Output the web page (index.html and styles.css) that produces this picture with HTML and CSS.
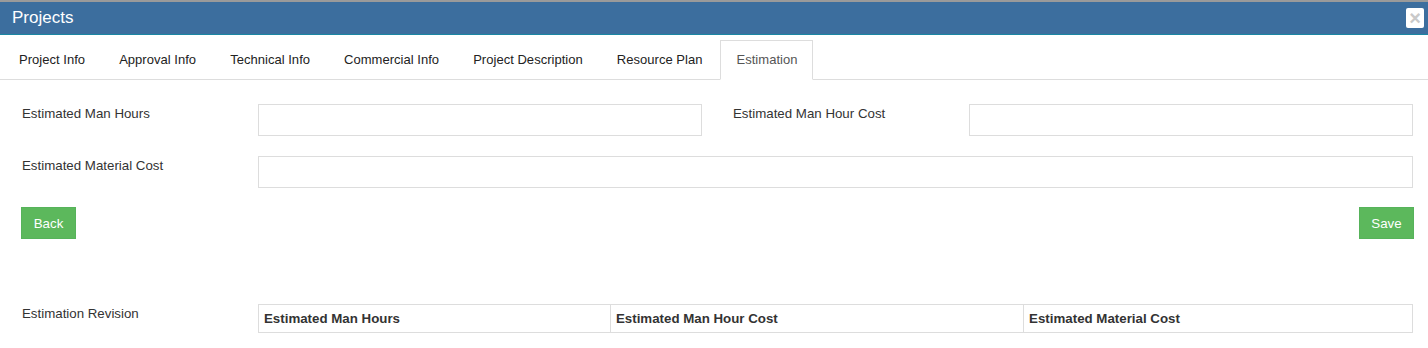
FILE: index.html
```html
<!DOCTYPE html>
<html lang="en">
<head>
    <meta charset="UTF-8">
    <title>Projects</title>
    <link rel="stylesheet" href="styles.css">
</head>
<body>
    <div class="backdrop-strip"></div>
    <div class="modal-header">
        <span class="modal-title">Projects</span>
        <button type="button" class="close">&times;</button>
    </div>

    <ul class="nav-tabs">
        <li><a href="#">Project Info</a></li>
        <li><a href="#">Approval Info</a></li>
        <li><a href="#">Technical Info</a></li>
        <li><a href="#">Commercial Info</a></li>
        <li><a href="#">Project Description</a></li>
        <li><a href="#">Resource Plan</a></li>
        <li class="active"><a href="#">Estimation</a></li>
    </ul>

    <div class="tab-pane">
        <div class="form-grid">
            <label class="cell label" for="est-hours">Estimated Man Hours</label>
            <div class="cell"><input type="text" id="est-hours"></div>
            <label class="cell label" for="est-hour-cost">Estimated Man Hour Cost</label>
            <div class="cell"><input type="text" id="est-hour-cost"></div>

            <label class="cell label" for="est-material">Estimated Material Cost</label>
            <div class="cell wide"><input type="text" id="est-material"></div>
        </div>

        <div class="button-row">
            <button type="button" class="btn-success">Back</button>
            <button type="button" class="btn-success">Save</button>
        </div>

        <div class="form-grid revision">
            <div class="cell label">Estimation Revision</div>
            <div class="cell wide">
                <table class="revision-table">
                    <thead>
                        <tr>
                            <th class="col-hours">Estimated Man Hours</th>
                            <th class="col-cost">Estimated Man Hour Cost</th>
                            <th>Estimated Material Cost</th>
                        </tr>
                    </thead>
                </table>
            </div>
        </div>
    </div>
</body>
</html>
```

FILE: styles.css
```css
body { margin: 0; font-family: "Liberation Sans", Arial, sans-serif; font-size: 13.3px; color: #333; background-color: #fff; }
.backdrop-strip { height: 2px; background-color: #9a9a9a; }
.modal-header { display: flex; align-items: center; justify-content: space-between; height: 33px; padding: 0 4px 1px 12px; box-sizing: border-box; background-color: #3c6e9e; border-bottom: 1px solid #1b87a3; }
.modal-title { font-size: 17px; color: #fff; }
.close { width: 18px; height: 20px; padding: 0; border: none; border-radius: 2px; background-color: #fff; color: #c9c9c9; font-family: "Liberation Sans", Arial, sans-serif; font-size: 20px; font-weight: bold; line-height: 20px; cursor: pointer; }
.nav-tabs { display: flex; list-style: none; margin: 0; padding: 5px 0 0 3px; border-bottom: 1px solid #ddd; font-size: 13px; letter-spacing: 0.03px; }
.nav-tabs li { margin: 0 2px -1px 0; }
.nav-tabs a { display: block; padding: 10px 15px; line-height: 18px; border: 1px solid transparent; color: #222; text-decoration: none; }
.nav-tabs .active a { border-color: #ddd; border-bottom-color: transparent; background-color: #fff; color: #555; }
.tab-pane { padding: 24px 0 20px 6px; }
.form-grid { display: grid; grid-template-columns: 1fr 2fr 1fr 2fr; row-gap: 20px; }
.cell { display: block; padding: 0 15px; line-height: 18px; }
.cell.label { padding: 1px 15px 0 16px; }
.cell.wide { grid-column: span 3; }
.cell input { display: block; width: 100%; height: 32px; box-sizing: border-box; border: 1px solid #ddd; padding: 6px 10px; font-family: inherit; font-size: 13px; }
.button-row { display: flex; justify-content: space-between; margin: 19px 14px 0 15px; }
.btn-success { width: 55px; height: 32px; padding: 0; border: 1px solid #56b35a; background-color: #5cb85c; color: #fff; font-family: inherit; font-size: 13.3px; cursor: pointer; }
.revision { margin-top: 65px; }
.revision-table { width: 100%; border-collapse: collapse; }
.revision-table th { border: 1px solid #ddd; padding: 5px 5px 4px; line-height: 18px; text-align: left; font-weight: bold; color: #333; }
.col-hours { width: 30.5%; }
.col-cost { width: 35.8%; }
```
